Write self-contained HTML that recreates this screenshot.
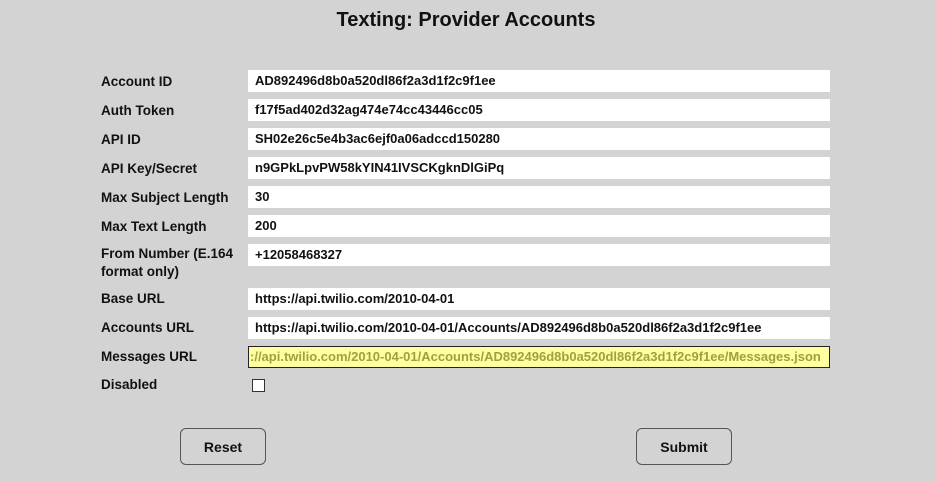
<!DOCTYPE html>
<html><head><meta charset="utf-8"><style>
body{margin:0;width:936px;height:481px;background:#d3d3d3;font-family:"Liberation Sans",sans-serif;position:relative;overflow:hidden;color:#111}
h1{position:absolute;top:9px;left:0;width:932px;text-align:center;margin:0;font-size:20px;font-weight:bold}
.l{position:absolute;left:101px;font-size:13.5px;font-weight:bold;line-height:18px}
.i{position:absolute;left:248px;width:582px;height:22px;background:#fff;font-size:13px;font-weight:bold;line-height:22px;padding-left:7px;box-sizing:border-box;white-space:nowrap;overflow:hidden}
.y{background:#ffffa0;border:1px solid #222;color:#a0a040;padding-left:1px;line-height:20px}
.cb{position:absolute;left:252px;top:379px;width:11px;height:11px;background:#fff;border:1px solid #333}
.b{position:absolute;top:428px;height:37px;border:1px solid #555;border-radius:6px;font-size:14px;font-weight:bold;text-align:center;line-height:37px;box-sizing:border-box}
</style></head><body>
<h1>Texting: Provider Accounts</h1>
<div class="l" style="top:73px">Account ID</div><div class="i" style="top:70px">AD892496d8b0a520dl86f2a3d1f2c9f1ee</div>
<div class="l" style="top:102px">Auth Token</div><div class="i" style="top:99px">f17f5ad402d32ag474e74cc43446cc05</div>
<div class="l" style="top:131px">API ID</div><div class="i" style="top:128px">SH02e26c5e4b3ac6ejf0a06adccd150280</div>
<div class="l" style="top:160px">API Key/Secret</div><div class="i" style="top:157px">n9GPkLpvPW58kYIN41IVSCKgknDlGiPq</div>
<div class="l" style="top:189px">Max Subject Length</div><div class="i" style="top:186px">30</div>
<div class="l" style="top:218px">Max Text Length</div><div class="i" style="top:215px">200</div>
<div class="l" style="top:245px">From Number (E.164<br>format only)</div><div class="i" style="top:244px">+12058468327</div>
<div class="l" style="top:290px">Base URL</div><div class="i" style="top:288px">https://api.twilio.com/2010-04-01</div>
<div class="l" style="top:319px">Accounts URL</div><div class="i" style="top:317px">https://api.twilio.com/2010-04-01/Accounts/AD892496d8b0a520dl86f2a3d1f2c9f1ee</div>
<div class="l" style="top:348px">Messages URL</div><div class="i y" style="top:346px">://api.twilio.com/2010-04-01/Accounts/AD892496d8b0a520dl86f2a3d1f2c9f1ee/Messages.json</div>
<div class="l" style="top:376px">Disabled</div><div class="cb"></div>
<div class="b" style="left:180px;width:86px">Reset</div>
<div class="b" style="left:636px;width:96px">Submit</div>
</body></html>
